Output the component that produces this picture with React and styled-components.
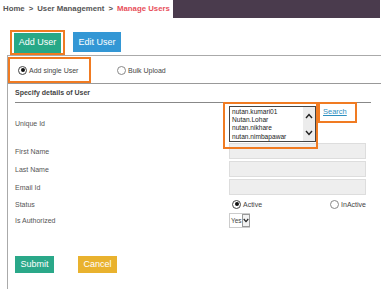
import React from "react";
import styled, { createGlobalStyle } from "styled-components";

const GlobalStyle = createGlobalStyle`
  body {
    margin: 0;
    background: #fff;
    font-family: "Liberation Sans", Arial, sans-serif;
  }
`;

const Page = styled.div`
  width: 386px;
`;

const TopBar = styled.div`
  display: flex;
  height: 18px;
`;

const Crumbs = styled.div`
  flex: none;
  width: 170px;
  padding-left: 3px;
  font-size: 7.8px;
  font-weight: bold;
  line-height: 17px;
  color: #555;
  white-space: nowrap;
  overflow: hidden;
`;

const Sep = styled.span`
  margin: 0 4px;
`;

const Current = styled.span`
  color: #e8505b;
`;

const DarkBar = styled.div`
  width: 207px;
  background: #4a3b4d;
`;

const ActionBar = styled.div`
  display: flex;
  align-items: flex-start;
  gap: 8px;
  height: 37px;
  padding: 12px 0 0 10px;
  box-sizing: border-box;
`;

const Marked = styled.div`
  display: flex;
  align-items: center;
  border: 2px solid #f07b22;
  box-sizing: border-box;
`;

const ButtonMark = styled(Marked)`
  height: 25px;
  padding: 0 2px;
`;

const Button = styled.button`
  border: 0;
  margin: 0;
  padding: 0;
  width: ${(p) => p.$w}px;
  height: ${(p) => p.$h}px;
  margin-top: ${(p) => p.$top || 0}px;
  background: ${(p) => p.$bg};
  color: #fff;
  font-family: inherit;
  font-size: 9px;
  line-height: 1;
`;

const Panel = styled.div`
  margin-left: 7px;
  width: 373px;
  border-left: 1px solid #aaa;
  border-top: 1px solid #aaa;
`;

const ModeRow = styled.div`
  display: flex;
  align-items: flex-start;
  height: 28px;
  padding-top: 1px;
  box-sizing: border-box;
  border-bottom: 1px solid #999;
`;

const ModeMark = styled(Marked)`
  width: 83px;
  height: 26px;
  padding-left: 8px;
`;

const Choice = styled.label`
  display: flex;
  align-items: center;
  gap: 2px;
  margin-left: ${(p) => p.$ml || 0}px;
  height: ${(p) => p.$h || 22}px;
  font-size: 7px;
  color: #444;
`;

const Radio = styled.span`
  position: relative;
  width: 7px;
  height: 7px;
  border: 1px solid ${(p) => (p.$on ? "#444" : "#888")};
  border-radius: 50%;
  background: #fff;

  &::after {
    content: "";
    display: ${(p) => (p.$on ? "block" : "none")};
    position: absolute;
    left: 1.5px;
    top: 1.5px;
    width: 4px;
    height: 4px;
    border-radius: 50%;
    background: #111;
  }
`;

const Section = styled.div`
  padding: 0 10px 16px 7px;
`;

const Title = styled.div`
  height: 18px;
  line-height: 18px;
  font-size: 7px;
  font-weight: bold;
  color: #444;
  border-bottom: 1px solid #888;
`;

const Row = styled.div`
  display: grid;
  grid-template-columns: 214px 1fr;
  align-items: center;
  height: ${(p) => p.$h}px;
  margin-bottom: ${(p) => p.$mb ?? 2}px;
`;

const Label = styled.span`
  font-size: 7px;
  color: #555;
`;

const Controls = styled.div`
  display: flex;
  align-items: flex-start;
  height: 100%;
`;

const ListWrap = styled.div`
  position: relative;
  margin-top: 3px;
`;

const ListOverlay = styled.span`
  position: absolute;
  top: -4px;
  left: -6px;
  right: -2px;
  bottom: -7px;
  border: 2px solid #f07b22;
`;

const ListBox = styled.div`
  display: flex;
  width: 87px;
  height: 36px;
  box-sizing: border-box;
  border: 1px solid #444;
  background: #fff;
`;

const Options = styled.div`
  flex: 1;
  padding: 1px 0 0 2px;
  font-size: 6.6px;
  line-height: 8.2px;
  color: #222;
  overflow: hidden;
  white-space: nowrap;
`;

const Scroll = styled.div`
  width: 12px;
  display: flex;
  flex-direction: column;
  justify-content: space-between;
  align-items: center;
  padding: 6px 0 5px;
  background: #ececec;
`;

const SearchMark = styled(Marked)`
  width: 39px;
  height: 21px;
  margin: -1px 0 0 2px;
  padding: 3px 0 0 3px;
  align-items: flex-start;
`;

const SearchLink = styled.a`
  font-size: 7.5px;
  color: #2d8fbf;
  text-decoration: underline;
`;

const Field = styled.div`
  width: 137px;
  height: 16px;
  box-sizing: border-box;
  background: #eee;
  border: 1px solid #ddd;
`;

const StatusGroup = styled.div`
  display: flex;
  justify-content: space-between;
  width: 137px;
  padding-left: 3px;
  box-sizing: border-box;
`;

const Select = styled.div`
  display: flex;
  align-items: center;
  justify-self: start;
  width: 21px;
  height: 15px;
  box-sizing: border-box;
  border: 1px solid #ccc;
  font-size: 6.5px;
  color: #444;
  padding-left: 1px;
`;

const Arrow = styled.span`
  flex: none;
  display: flex;
  align-items: center;
  justify-content: center;
  margin-left: auto;
  width: 8px;
  height: 13px;
  box-sizing: border-box;
  border: 1px solid #999;
  background: #f2f2f2;
`;

const Footer = styled.div`
  display: flex;
  gap: 24px;
  margin-top: 28px;
`;

const Chevron = ({ up, w = 8, h = 6, sw = 1.4 }) => (
  <svg width={w} height={h} viewBox="0 0 8 6">
    <path
      d={up ? "M1 5 L4 1.5 L7 5" : "M1 1 L4 4.5 L7 1"}
      fill="none"
      stroke="#222"
      strokeWidth={sw}
    />
  </svg>
);

const users = ["nutan.kumari01", "Nutan.Lohar", "nutan.nikhare", "nutan.nimbapawar"];

export default function App() {
  return (
    <Page>
      <GlobalStyle />
      <TopBar>
        <Crumbs>
          Home<Sep>&gt;</Sep>User Management<Sep>&gt;</Sep>
          <Current>Manage Users</Current>
        </Crumbs>
        <DarkBar />
      </TopBar>

      <ActionBar>
        <ButtonMark>
          <Button $w={47} $h={20} $bg="#27a887">
            Add User
          </Button>
        </ButtonMark>
        <Button $w={48} $h={20} $top={2} $bg="#3397d5">
          Edit User
        </Button>
      </ActionBar>

      <Panel>
        <ModeRow>
          <ModeMark>
            <Choice>
              <Radio $on />
              Add single User
            </Choice>
          </ModeMark>
          <Choice $ml={26} $h={26}>
            <Radio />
            Bulk Upload
          </Choice>
        </ModeRow>

        <Section>
          <Title>Specify details of User</Title>

          <Row $h={40} $mb={0}>
            <Label>Unique Id</Label>
            <Controls>
              <ListWrap>
                <ListBox>
                  <Options>
                    {users.map((u) => (
                      <div key={u}>{u}</div>
                    ))}
                  </Options>
                  <Scroll>
                    <Chevron up />
                    <Chevron />
                  </Scroll>
                </ListBox>
                <ListOverlay />
              </ListWrap>
              <SearchMark>
                <SearchLink>Search</SearchLink>
              </SearchMark>
            </Controls>
          </Row>

          <Row $h={16}>
            <Label>First Name</Label>
            <Field />
          </Row>
          <Row $h={16}>
            <Label>Last Name</Label>
            <Field />
          </Row>
          <Row $h={16}>
            <Label>Email Id</Label>
            <Field />
          </Row>
          <Row $h={14}>
            <Label>Status</Label>
            <StatusGroup>
              <Choice $h={14}>
                <Radio $on />
                Active
              </Choice>
              <Choice $h={14}>
                <Radio />
                InActive
              </Choice>
            </StatusGroup>
          </Row>
          <Row $h={15} $mb={0}>
            <Label>Is Authorized</Label>
            <Select>
              Yes
              <Arrow>
                <Chevron w={6} h={5} sw={1.6} />
              </Arrow>
            </Select>
          </Row>

          <Footer>
            <Button $w={39} $h={17} $bg="#2aa889">
              Submit
            </Button>
            <Button $w={39} $h={17} $bg="#e9b22e">
              Cancel
            </Button>
          </Footer>
        </Section>
      </Panel>
    </Page>
  );
}
